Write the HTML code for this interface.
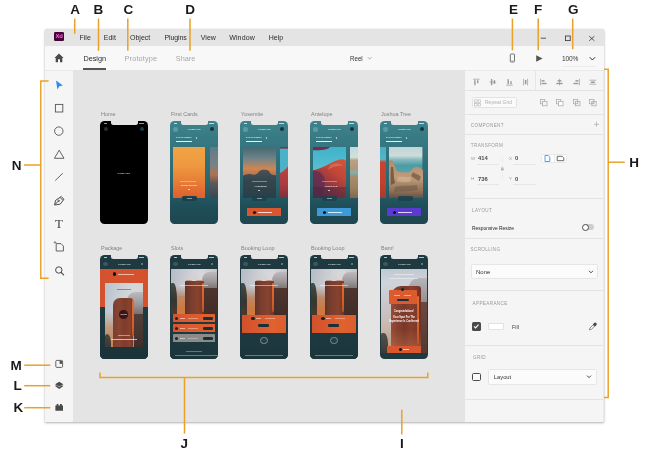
<!DOCTYPE html>
<html>
<head>
<meta charset="utf-8">
<style>
*{margin:0;padding:0;box-sizing:border-box}
html,body{width:650px;height:457px;overflow:hidden;background:#fff}
body{position:relative;font-family:"Liberation Sans",sans-serif;color:#333}
div,span,svg{position:absolute}
#win{left:44.5px;top:29px;width:559.5px;height:393px;background:#e4e4e4;border-radius:1.5px 1.5px 0 0;box-shadow:0 1px 2.5px rgba(0,0,0,.30),0 0 1px rgba(0,0,0,.22)}
#title{left:44.5px;top:29px;width:559.5px;height:17px;background:#e4e4e4;border-radius:1.5px 1.5px 0 0}
#hdr{left:44.5px;top:45.5px;width:559.5px;height:25.5px;background:#f8f8f8;border-bottom:1px solid #e9e9e9}
#tools{left:44.5px;top:71px;width:28.5px;height:351px;background:#f5f5f5}
#canvas{left:73px;top:70px;width:392px;height:352px;background:#e4e4e4}
#panel{left:465px;top:71px;width:139px;height:351px;background:#f5f5f5}
.t{white-space:nowrap;line-height:1}
.menu{font-size:7px;color:#2c2c2c;top:34.3px}
.tab{font-size:7.3px;top:55.2px}
.lbl{font-size:13.5px;font-weight:bold;color:#1a1a1a;line-height:1;white-space:nowrap}
.ab{width:48px;height:103.5px;border-radius:4.5px;overflow:hidden}
.abl{font-size:5.9px;color:#828282;transform:scaleX(.93);transform-origin:0 50%;white-space:nowrap;line-height:1}
.notch{left:10.5px;top:-1px;width:27px;height:4.8px;background:#e4e4e4;border-radius:0 0 2.5px 2.5px}
.ph>div{filter:blur(.55px)}
.ph2>div{filter:blur(.5px)}
.ph>div.tx{filter:blur(.25px)}
.tx{filter:blur(.25px)}
.mt{font-weight:bold;color:#fff;white-space:nowrap;line-height:1;font-size:2px;letter-spacing:.45px}
.sec{font-size:4.6px;letter-spacing:.36px;color:#999;white-space:nowrap;line-height:1}
.sep{left:465px;width:138px;height:1px;background:#e3e3e3}
.pt{font-size:6px;color:#333;white-space:nowrap;line-height:1}
</style>
</head>
<body>
<div id="root" style="left:0;top:0;width:650px;height:457px;will-change:transform;transform:translateZ(0)">
<div id="win"></div>
<div id="title"></div>
<div id="hdr"></div>
<div id="tools"></div>
<div id="canvas"></div>
<div id="panel"></div>

<!-- TITLEBAR -->
<div style="left:53.8px;top:32.2px;width:9.8px;height:9.2px;background:#470137;border-radius:1.2px"></div>
<span class="t" style="left:55.4px;top:34px;font-size:5.9px;font-weight:bold;color:#f76ff0;letter-spacing:-.15px">Xd</span>
<span class="t menu" style="left:79.5px">File</span>
<span class="t menu" style="left:103.8px">Edit</span>
<span class="t menu" style="left:130px">Object</span>
<span class="t menu" style="left:164.6px;letter-spacing:-.15px">Plugins</span>
<span class="t menu" style="left:200.8px">View</span>
<span class="t menu" style="left:229.2px;letter-spacing:.13px">Window</span>
<span class="t menu" style="left:268.8px">Help</span>
<svg style="left:535px;top:30px" width="66" height="16" viewBox="535 30 66 16">
  <path d="M540.8 38.2H546" stroke="#333" stroke-width=".8" fill="none"/>
  <rect x="565.4" y="36" width="4.8" height="4.6" stroke="#333" stroke-width=".8" fill="none"/>
  <path d="M589.2 36.2L594.4 40.8M594.4 36.2L589.2 40.8" stroke="#333" stroke-width=".8" fill="none"/>
</svg>

<!-- HEADER -->
<svg style="left:53px;top:52px" width="12" height="12" viewBox="0 0 12 12">
  <path d="M6 1.6L1.4 5.9H2.7V10.2H5V7.3H7V10.2H9.3V5.9H10.6Z" fill="#4a4a4a"/>
</svg>
<span class="t tab" style="left:83.4px;color:#2c2c2c">Design</span>
<div style="left:83.2px;top:68px;width:22.8px;height:2px;background:#555"></div>
<span class="t tab" style="left:124.6px;color:#a8a8a8;letter-spacing:.15px">Prototype</span>
<span class="t tab" style="left:175.8px;color:#a8a8a8">Share</span>
<span class="t" style="left:349.7px;top:55.8px;font-size:6.8px;color:#333;transform:scaleX(.91);transform-origin:0 50%">Reel</span>
<svg style="left:366px;top:55.4px" width="8" height="7" viewBox="0 0 8 7"><path d="M1.7 2L3.7 4.2L5.7 2" stroke="#999" stroke-width=".7" fill="none"/></svg>
<svg style="left:508px;top:52px" width="40" height="12" viewBox="508 52 40 12">
  <rect x="510.3" y="54" width="4.2" height="8" rx=".8" stroke="#666" stroke-width=".9" fill="none"/>
  <path d="M511.4 60.9H513.4" stroke="#666" stroke-width=".5"/>
  <path d="M536.2 55.2L542.6 58.5L536.2 61.8Z" fill="#555"/>
</svg>
<span class="t" style="left:562px;top:55.8px;font-size:6.6px;color:#3a3a3a;letter-spacing:-.15px">100%</span>
<svg style="left:586px;top:54px" width="12" height="9" viewBox="586 54 12 9"><path d="M589.7 57.2L592.4 60L595.1 57.2" stroke="#333" stroke-width="1" fill="none"/></svg>
<div style="left:562px;top:66px;width:34px;height:1px;background:#ececec"></div>




<!-- ARTBOARD LABELS -->
<span class="abl" style="left:100.6px;top:111.5px">Home</span>
<span class="abl" style="left:170.6px;top:111.5px">First Cards</span>
<span class="abl" style="left:240.6px;top:111.5px">Yosemite</span>
<span class="abl" style="left:310.6px;top:111.5px">Antelope</span>
<span class="abl" style="left:380.6px;top:111.5px">Joshua Tree</span>
<span class="abl" style="left:100.6px;top:246.1px">Package</span>
<span class="abl" style="left:170.6px;top:246.1px">Slots</span>
<span class="abl" style="left:240.6px;top:246.1px">Booking Loop</span>
<span class="abl" style="left:310.6px;top:246.1px">Booking Loop</span>
<span class="abl" style="left:380.6px;top:246.1px">Bam!</span>

<!-- ROW 1 -->
<!-- Home -->
<div class="ab" style="left:100px;top:120.8px;background:#000">
  <div class="notch"></div>
  <div style="left:3.6px;top:6.6px;width:4px;height:4px;border-radius:50%;background:#2b2f30"></div>
  <div style="left:39.6px;top:6.6px;width:4px;height:4px;border-radius:50%;background:#1d3a44"></div>
  <span class="mt" style="left:17.5px;top:50.9px;font-size:2.3px;letter-spacing:.18px;opacity:.8">COMPASS</span><div style="left:3.6px;top:1.9px;width:3px;height:.8px;background:#fff;opacity:.6"></div><div style="left:39.4px;top:1.9px;width:5px;height:.8px;background:#fff;opacity:.6"></div>
</div>
<!-- First Cards -->
<div class="ab" style="left:170px;top:120.8px;background:linear-gradient(#3e838c 0%,#33737d 30%,#2a6670 60%,#1f4f59 82%,#1e4650 100%)">
  <div class="notch"></div>
  <div style="left:3.4px;top:6.4px;width:4.4px;height:4.4px;border-radius:50%;background:#5e9aa2"></div>
  <div style="left:39.8px;top:6.6px;width:4px;height:4px;border-radius:50%;background:#17343b"></div>
  <span class="mt" style="left:17.9px;top:7.6px;font-size:2.3px;letter-spacing:.18px;opacity:.85">COMPASS</span><div style="left:3.6px;top:1.9px;width:3px;height:.8px;background:#fff;opacity:.7"></div><div style="left:39.4px;top:1.9px;width:5px;height:.8px;background:#fff;opacity:.7"></div>
  <span class="mt" style="left:5.8px;top:16.5px;font-size:2.5px;letter-spacing:.1px;opacity:.9">CALIFORNIA</span><div style="left:26.4px;top:16.6px;width:1px;height:2.2px;background:#fff;opacity:.7;transform:rotate(-15deg)"></div>
  <div style="left:5.6px;top:20.3px;width:16.4px;height:.7px;background:#fff;opacity:.9"></div>
  <div style="left:3px;top:26.4px;width:32.4px;height:50.8px;background:linear-gradient(#f0a445 0%,#ee9940 35%,#e67c36 70%,#de5f2e 100%)"></div>
  <div style="left:39.8px;top:26.4px;width:8.2px;height:50.8px;background:linear-gradient(#5e7c86 0%,#7a8284 35%,#b0714f 55%,#5d5a58 70%,#37474e 100%)"></div>
  <div style="left:12px;top:75.6px;width:14.6px;height:4.2px;border-radius:1.5px 1.5px 2px 2px;background:#1b4049"></div>
  <span class="mt" style="left:11px;top:63.2px;font-size:2.3px;letter-spacing:0;opacity:.95;transform:scaleX(.74);transform-origin:0 50%">GETTING STARTED</span>
  <div class="tx" style="left:10.4px;top:60.6px;width:16px;height:.7px;background:#fff;opacity:.35"></div>
  <div class="tx" style="left:17.6px;top:68.4px;width:2px;height:.9px;background:#fff;opacity:.7"></div>
  <div class="tx" style="left:16.6px;top:77.2px;width:5.4px;height:.7px;background:#fff;opacity:.45"></div>
</div>
<!-- Yosemite -->
<div class="ab" style="left:240px;top:120.8px;background:linear-gradient(#3e838c 0%,#33737d 30%,#2a6670 60%,#1f4f59 82%,#1e4650 100%)">
  <div class="notch"></div>
  <div style="left:3.4px;top:6.4px;width:4.4px;height:4.4px;border-radius:50%;background:#5e9aa2"></div>
  <div style="left:39.8px;top:6.6px;width:4px;height:4px;border-radius:50%;background:#17343b"></div>
  <span class="mt" style="left:17.9px;top:7.6px;font-size:2.3px;letter-spacing:.18px;opacity:.85">COMPASS</span><div style="left:3.6px;top:1.9px;width:3px;height:.8px;background:#fff;opacity:.7"></div><div style="left:39.4px;top:1.9px;width:5px;height:.8px;background:#fff;opacity:.7"></div>
  <span class="mt" style="left:5.8px;top:16.5px;font-size:2.5px;letter-spacing:.1px;opacity:.9">CALIFORNIA</span><div style="left:26.4px;top:16.6px;width:1px;height:2.2px;background:#fff;opacity:.7;transform:rotate(-15deg)"></div>
  <div style="left:5.6px;top:20.3px;width:16.4px;height:.7px;background:#fff;opacity:.9"></div>
  <svg style="left:3px;top:26.3px" width="33.4" height="51.2" viewBox="0 0 33.4 51.2">
    <defs>
      <linearGradient id="ysky" x1="0" y1="0" x2="0" y2="1"><stop offset="0" stop-color="#486870"/><stop offset=".2" stop-color="#6a8086"/><stop offset=".33" stop-color="#a08672"/><stop offset=".43" stop-color="#d4844e"/><stop offset=".5" stop-color="#c07a50"/><stop offset="1" stop-color="#30424a"/></linearGradient>
      <linearGradient id="ymt" x1="0" y1="0" x2="0" y2="1"><stop offset="0" stop-color="#4a5258"/><stop offset=".35" stop-color="#36464e"/><stop offset="1" stop-color="#28404a"/></linearGradient>
      <filter id="yb1" x="-10%" y="-10%" width="120%" height="120%"><feGaussianBlur stdDeviation=".45"/></filter>
    </defs>
    <rect width="33.4" height="51.2" fill="url(#ysky)"/>
    <path d="M-1 29C3 27.5 6 26.5 9 27.5C12 28.5 14 27 16 24.4C17.4 22.8 20 22.4 23 22.8C25.6 23.2 26.6 24.6 27.4 26.6C29 28 31.6 28.4 34.4 28V52H-1Z" fill="url(#ymt)" filter="url(#yb1)"/>
  </svg>
  <svg style="left:39.8px;top:26.3px" width="8.2" height="51.2" viewBox="0 0 8.2 51.2">
    <defs><linearGradient id="yr" x1="0" y1="0" x2="0" y2="1"><stop offset="0" stop-color="#c04440"/><stop offset=".6" stop-color="#a83a3e"/><stop offset="1" stop-color="#7c3040"/></linearGradient></defs>
    <rect width="8.2" height="51.2" fill="#4ab2c8"/>
    <rect width="8.2" height="1.6" fill="#8a2a4a"/>
    <path d="M0 26C3 25 6 22 8.2 19V51.2H0Z" fill="url(#yr)"/>
  </svg>
  <div style="left:12px;top:75.6px;width:14.6px;height:4.2px;border-radius:1.5px 1.5px 2px 2px;background:#1d434c;opacity:.9"></div>
  <span class="mt" style="left:14.4px;top:64px;font-size:2.2px;letter-spacing:.15px;opacity:.9">YOSEMITE</span>
  <div class="tx" style="left:11.6px;top:60.6px;width:15px;height:.7px;background:#fff;opacity:.35"></div>
  <div class="tx" style="left:18.2px;top:68.8px;width:2px;height:.9px;background:#fff;opacity:.7"></div>
  <div class="tx" style="left:16.6px;top:77.2px;width:5.4px;height:.7px;background:#fff;opacity:.45"></div>
  <div style="left:7px;top:87.4px;width:33.8px;height:7.8px;border-radius:.6px;background:#d9562e"></div>
  <div style="left:13.4px;top:89.8px;width:3px;height:3px;border-radius:50%;background:#111"></div>
  <div style="left:17.6px;top:91px;width:14px;height:.8px;background:#fff;opacity:.8"></div>
</div>
<!-- Antelope -->
<div class="ab" style="left:310px;top:120.8px;background:linear-gradient(#3e838c 0%,#33737d 30%,#2a6670 60%,#1f4f59 82%,#1e4650 100%)">
  <div class="notch"></div>
  <div style="left:3.4px;top:6.4px;width:4.4px;height:4.4px;border-radius:50%;background:#5e9aa2"></div>
  <div style="left:39.8px;top:6.6px;width:4px;height:4px;border-radius:50%;background:#17343b"></div>
  <span class="mt" style="left:17.9px;top:7.6px;font-size:2.3px;letter-spacing:.18px;opacity:.85">COMPASS</span><div style="left:3.6px;top:1.9px;width:3px;height:.8px;background:#fff;opacity:.7"></div><div style="left:39.4px;top:1.9px;width:5px;height:.8px;background:#fff;opacity:.7"></div>
  <span class="mt" style="left:5.8px;top:16.5px;font-size:2.5px;letter-spacing:.1px;opacity:.9">CALIFORNIA</span><div style="left:26.4px;top:16.6px;width:1px;height:2.2px;background:#fff;opacity:.7;transform:rotate(-15deg)"></div>
  <div style="left:5.6px;top:20.3px;width:16.4px;height:.7px;background:#fff;opacity:.9"></div>
  <svg style="left:3px;top:26.3px" width="33.4" height="51.2" viewBox="0 0 33.4 51.2">
    <defs>
      <linearGradient id="asky" x1="0" y1="0" x2="0" y2="1"><stop offset="0" stop-color="#3fb3ca"/><stop offset=".5" stop-color="#5cc0d0"/><stop offset="1" stop-color="#6cc4d0"/></linearGradient>
      <linearGradient id="arock" x1=".9" y1="0" x2=".25" y2="1"><stop offset="0" stop-color="#d4543c"/><stop offset=".35" stop-color="#c04636"/><stop offset=".7" stop-color="#8a3444"/><stop offset="1" stop-color="#58304a"/></linearGradient>
      <filter id="ab1" x="-10%" y="-10%" width="120%" height="120%"><feGaussianBlur stdDeviation=".5"/></filter>
    </defs>
    <rect width="33.4" height="51.2" fill="url(#asky)"/>
    <path d="M0 0H17C15 2.6 9 3.6 0 3.2Z" fill="#7a2a4c" filter="url(#ab1)"/>
    <path d="M-1 23.5C5 22.5 10 20 16 17C22 14 27 12 30.5 12.4C32.4 12.8 33.6 14 34.4 15.4V52H-1Z" fill="url(#arock)" filter="url(#ab1)"/>
    <path d="M-1 24C4 23 8 25 11 30C13 36 10 46 8 52H-1Z" fill="#5e2e52" opacity=".75" filter="url(#ab1)"/>
    <path d="M17 18.5C22 15.5 27 15.5 30 19C26 18.5 21 19.5 15 22.5Z" fill="#e27a66" opacity=".6" filter="url(#ab1)"/>
    <rect y="40" width="33.4" height="11.2" fill="#3a2436" opacity=".35"/>
  </svg>
  <div style="left:39.6px;top:26.3px;width:8.4px;height:51.2px;background:linear-gradient(#c4dada 0%,#cfe0de 20%,#b8a286 26%,#b49678 42%,#7fb0b0 50%,#a88c6c 58%,#9c8060 80%,#80684e 100%)"></div>
  <div style="left:12px;top:75.6px;width:14.6px;height:4.2px;border-radius:1.5px 1.5px 2px 2px;background:#1d434c;opacity:.9"></div>
  <span class="mt" style="left:14.4px;top:64px;font-size:2.2px;letter-spacing:.15px;opacity:.9">ANTELOPE</span>
  <div class="tx" style="left:11.6px;top:60.6px;width:15px;height:.7px;background:#fff;opacity:.35"></div>
  <div class="tx" style="left:18.2px;top:68.8px;width:2px;height:.9px;background:#fff;opacity:.7"></div>
  <div class="tx" style="left:16.6px;top:77.2px;width:5.4px;height:.7px;background:#fff;opacity:.45"></div>
  <div style="left:7px;top:87.4px;width:33.8px;height:7.8px;border-radius:.6px;background:#3f9bd8"></div>
  <div style="left:13.4px;top:89.8px;width:3px;height:3px;border-radius:50%;background:#111"></div>
  <div style="left:17.6px;top:91px;width:14px;height:.8px;background:#fff;opacity:.8"></div>
</div>
<!-- Joshua Tree -->
<div class="ab" style="left:380px;top:120.8px;background:linear-gradient(#3e838c 0%,#33737d 30%,#2a6670 60%,#1f4f59 82%,#1e4650 100%)">
  <div class="notch"></div>
  <div style="left:3.4px;top:6.4px;width:4.4px;height:4.4px;border-radius:50%;background:#5e9aa2"></div>
  <div style="left:39.8px;top:6.6px;width:4px;height:4px;border-radius:50%;background:#17343b"></div>
  <span class="mt" style="left:17.9px;top:7.6px;font-size:2.3px;letter-spacing:.18px;opacity:.85">COMPASS</span><div style="left:3.6px;top:1.9px;width:3px;height:.8px;background:#fff;opacity:.7"></div><div style="left:39.4px;top:1.9px;width:5px;height:.8px;background:#fff;opacity:.7"></div>
  <span class="mt" style="left:5.8px;top:16.5px;font-size:2.5px;letter-spacing:.1px;opacity:.9">CALIFORNIA</span><div style="left:26.4px;top:16.6px;width:1px;height:2.2px;background:#fff;opacity:.7;transform:rotate(-15deg)"></div>
  <div style="left:5.6px;top:20.3px;width:16.4px;height:.7px;background:#fff;opacity:.9"></div>
  <div style="left:0;top:26.3px;width:5.5px;height:51.2px;background:linear-gradient(#48aec2 0%,#54b6c6 24%,#c8442e 30%,#c4402c 70%,#a83a30 100%)"></div>
  <svg style="left:9.2px;top:26.3px" width="33.4" height="51.2" viewBox="0 0 33.4 51.2">
    <defs>
      <linearGradient id="jsky" x1="0" y1="0" x2="0" y2="1"><stop offset="0" stop-color="#c2d4d6"/><stop offset=".17" stop-color="#cddcdc"/><stop offset=".24" stop-color="#8cbcc0"/><stop offset=".36" stop-color="#4a9ca6"/><stop offset=".5" stop-color="#5aa4aa"/><stop offset="1" stop-color="#5aa4aa"/></linearGradient>
      <linearGradient id="jrock" x1="0" y1="0" x2="0" y2="1"><stop offset="0" stop-color="#b88a66"/><stop offset=".45" stop-color="#c09c7a"/><stop offset=".8" stop-color="#8e7158"/><stop offset="1" stop-color="#5e4c3e"/></linearGradient>
      <filter id="jb1" x="-10%" y="-10%" width="120%" height="120%"><feGaussianBlur stdDeviation=".45"/></filter>
    </defs>
    <rect width="33.4" height="51.2" fill="url(#jsky)"/>
    <path d="M-1 14C1 12.5 3.5 13 4.6 15C5.6 18 6 22 8 24C11 26 14 25 17 25.5C20 26 22 24 24 21.5C26 19.5 29 19.5 31 21C32.6 22 33.6 23 34.4 24V52H-1Z" fill="url(#jrock)" filter="url(#jb1)"/>
    <path d="M4 20C5 24 4.4 30 6 36L2 38C1 32 1.5 25 2 20Z" fill="#5e4636" opacity=".7" filter="url(#jb1)"/>
    <path d="M24 25C26 27 30 27 32 30L30 34C27 32 24 31 22 29Z" fill="#6a5040" opacity=".65" filter="url(#jb1)"/>
    <path d="M9 30C13 29 17 31 21 30L22 34C17 36 12 35 8 34Z" fill="#d8bc9c" opacity=".55" filter="url(#jb1)"/>
    <path d="M6 40C12 38 20 39 28 38L29 43C20 45 12 44 5 45Z" fill="#6a5444" opacity=".5" filter="url(#jb1)"/>
  </svg>
  <div style="left:18.4px;top:75.6px;width:14.6px;height:4.2px;border-radius:1.5px 1.5px 2px 2px;background:#1d434c;opacity:.9"></div>
  <div style="left:7px;top:87.4px;width:33.8px;height:7.8px;border-radius:.6px;background:#5a3ad0"></div>
  <div style="left:13.4px;top:89.8px;width:3px;height:3px;border-radius:50%;background:#111"></div>
  <div style="left:17.6px;top:91px;width:14px;height:.8px;background:#fff;opacity:.8"></div>
</div>


<!-- ROW 2 -->
<!-- Package -->
<div class="ab" style="left:100px;top:255.3px;background:#1e3a40">
  <div class="notch"></div>
  <div style="left:3.4px;top:6.4px;width:4.4px;height:4.4px;border-radius:50%;background:#3c575c"></div>
  <span class="mt" style="left:17.9px;top:7.6px;font-size:2.3px;letter-spacing:.18px;opacity:.85">COMPASS</span><div style="left:3.6px;top:1.9px;width:3px;height:.8px;background:#fff;opacity:.7"></div><div style="left:39.4px;top:1.9px;width:5px;height:.8px;background:#fff;opacity:.7"></div>
  <div style="left:41px;top:7.6px;width:1.8px;height:1.8px;background:#9fb0b2;opacity:.5"></div>
  <div style="left:0;top:13.6px;width:48px;height:37.8px;background:#d4532e"></div>
  <div style="left:0;top:51.4px;width:48px;height:52.1px;background:linear-gradient(#1f3c42,#1c363c 60%,#1a3238)"></div>
  <div style="left:13px;top:17.2px;width:3.4px;height:3.4px;border-radius:50%;background:#111"></div>
  <div class="tx" style="left:17.6px;top:18.6px;width:16.6px;height:0.9px;background:#fff;opacity:0.6"></div>
  <div class="ph" style="left:5px;top:27.6px;width:38px;height:64.4px;overflow:hidden;background:linear-gradient(100deg,#b8c2ce 0%,#d2d6da 50%,#d6d6d8 70%,#c4c2c6 100%)">
    <div style="left:0;top:29.0px;width:38px;height:35.4px;background:linear-gradient(rgba(190,160,140,0),#c09a80 45%,#c8844e)"></div>
    <div style="left:-1.5px;top:51.5px;width:7.6px;height:19.3px;border-radius:40% 50% 0 0;background:linear-gradient(#4a463e,#38342e)"></div>
    <div style="left:20.9px;top:9.0px;width:19.0px;height:23.2px;border-radius:50% 0 0 30%;background:linear-gradient(#bcbabe,#9a9698 55%,#766c6a)"></div>
    <div style="left:28.9px;top:30.9px;width:11.4px;height:38.6px;background:linear-gradient(#54403a,#3a2a26)"></div>
    <div style="left:7.6px;top:14.8px;width:20.5px;height:58.0px;border-radius:7px 3px 0 0;background:linear-gradient(90deg,#7a3e30 0%,#8a4432 30%,#7e3c2c 60%,#8a422e 85%,#6c3628 100%)"></div>
    <div style="left:26.8px;top:17.4px;width:2.5px;height:36.1px;background:linear-gradient(#e66a2c,#d85e28 70%,#b85028);border-radius:1px"></div>
    <div style="left:14.1px;top:27.1px;width:8.6px;height:8.6px;border-radius:50%;background:#3a1416;filter:blur(.3px)"></div><span class="mt" style="left:15.6px;top:30.4px;font-size:2.2px;letter-spacing:.1px;filter:none;opacity:.9">SEND</span><div class="tx" style="left:12px;top:6px;width:14px;height:1px;background:#3c4a52;opacity:0.5"></div><div class="tx" style="left:6px;top:56px;width:26px;height:1px;background:#fff;opacity:0.65"></div><div class="tx" style="left:13px;top:52px;width:12px;height:0.9px;background:#fff;opacity:0.45"></div>
  </div>
</div>
<!-- Slots -->
<div class="ab" style="left:170px;top:255.3px;background:#1e3a40">
  <div class="notch"></div>
  <div style="left:3.4px;top:6.4px;width:4.4px;height:4.4px;border-radius:50%;background:#3c575c"></div>
  <span class="mt" style="left:17.9px;top:7.6px;font-size:2.3px;letter-spacing:.18px;opacity:.85">COMPASS</span><div style="left:3.6px;top:1.9px;width:3px;height:.8px;background:#fff;opacity:.7"></div><div style="left:39.4px;top:1.9px;width:5px;height:.8px;background:#fff;opacity:.7"></div>
  <div style="left:41px;top:7.6px;width:1.8px;height:1.8px;background:#9fb0b2;opacity:.5"></div>
  <div style="left:0;top:55px;width:48px;height:48.5px;background:linear-gradient(#1f3c42,#1b353b)"></div>
  <div class="ph" style="left:1px;top:13.6px;width:46px;height:45.6px;overflow:hidden;background:linear-gradient(100deg,#b4bac4 0%,#d4d4d8 45%,#d8d6d8 60%,#bcb8ba 100%)">
    <div style="left:0;top:17.3px;width:46px;height:28.3px;background:linear-gradient(rgba(176,140,120,0),#b08468 45%,#b47850)"></div>
    <div style="left:4.6px;top:27.4px;width:11.0px;height:20.5px;background:linear-gradient(#c08868,#cc7840 60%,#d07e44)"></div>
    <div style="left:-1.8px;top:13.7px;width:7.4px;height:34.2px;border-radius:40% 50% 0 0;background:linear-gradient(#484a44,#343630 50%,#54392c)"></div>
    <div style="left:31.3px;top:2.7px;width:16.6px;height:18.2px;border-radius:45% 0 0 30%;background:linear-gradient(#bcbabe,#9c9698 55%,#766c6a)"></div>
    <div style="left:33.1px;top:19.2px;width:14.7px;height:31.9px;background:linear-gradient(#4e362e,#3e2a26)"></div>
    <div style="left:13.8px;top:10.9px;width:19.3px;height:41.0px;border-radius:2px 3px 0 0;background:linear-gradient(90deg,#62342a 0%,#7c3e2e 35%,#86432f 70%,#6c3628 100%)"></div>
    <div style="left:30.6px;top:13.7px;width:2.3px;height:29.2px;background:linear-gradient(#e66a2c,#d45c28 70%,#b85028);border-radius:1px"></div>
    <div style="left:20.4px;top:6.5px;width:5.2px;height:5.2px;border-radius:50%;background:#d2d2d6;opacity:.8;filter:blur(.3px)"></div>
    <div class="tx" style="left:14px;top:11.6px;width:18px;height:1px;background:#fff;opacity:0.5"></div><div class="tx" style="left:9px;top:16.4px;width:28px;height:1px;background:#fff;opacity:0.5"></div>
  </div>
  <div style="left:3px;top:59.1px;width:42.4px;height:8px;border-radius:.5px;background:linear-gradient(90deg,#d8552e,#e0622f)"></div>
  <div style="left:3px;top:69.1px;width:42.4px;height:8px;border-radius:.5px;background:linear-gradient(90deg,#d8552e,#e0622f)"></div>
  <div style="left:3px;top:78.9px;width:42.4px;height:8.2px;border-radius:.5px;background:#8b8b89"></div>
  <div style="left:5.4px;top:61.6px;width:3px;height:3px;border-radius:50%;background:#16282c"></div>
  <div style="left:5.4px;top:71.6px;width:3px;height:3px;border-radius:50%;background:#16282c"></div>
  <div style="left:5.4px;top:81.5px;width:3px;height:3px;border-radius:50%;background:#16282c"></div>
  <div style="left:33.4px;top:61.9px;width:9.8px;height:2.5px;border-radius:1.2px;background:#17303a"></div>
  <div style="left:33.4px;top:71.9px;width:9.8px;height:2.5px;border-radius:1.2px;background:#17303a"></div>
  <div style="left:33.4px;top:81.8px;width:9.8px;height:2.5px;border-radius:1.2px;background:#17303a"></div>
  <div class="tx" style="left:10px;top:62.8px;width:5px;height:0.8px;background:#fff;opacity:0.5"></div><div class="tx" style="left:18px;top:62.8px;width:10px;height:0.8px;background:#fff;opacity:0.35"></div>
  <div class="tx" style="left:10px;top:72.8px;width:5px;height:0.8px;background:#fff;opacity:0.5"></div><div class="tx" style="left:18px;top:72.8px;width:10px;height:0.8px;background:#fff;opacity:0.35"></div>
  <div class="tx" style="left:10px;top:82.7px;width:5px;height:0.8px;background:#fff;opacity:0.5"></div><div class="tx" style="left:18px;top:82.7px;width:10px;height:0.8px;background:#fff;opacity:0.3"></div>
  <div class="tx" style="left:16px;top:96.2px;width:16px;height:0.8px;background:#b8c4c6;opacity:0.45"></div>
  <div style="left:5px;top:99.5px;width:43px;height:1.2px;background:#d8562e"></div>
</div>
<!-- Booking Loop 1 -->
<div class="ab" style="left:240px;top:255.3px;background:#1e3a40">
  <div class="notch"></div>
  <div style="left:3.4px;top:6.4px;width:4.4px;height:4.4px;border-radius:50%;background:#3c575c"></div>
  <span class="mt" style="left:17.9px;top:7.6px;font-size:2.3px;letter-spacing:.18px;opacity:.85">COMPASS</span><div style="left:3.6px;top:1.9px;width:3px;height:.8px;background:#fff;opacity:.7"></div><div style="left:39.4px;top:1.9px;width:5px;height:.8px;background:#fff;opacity:.7"></div>
  <div style="left:41px;top:7.6px;width:1.8px;height:1.8px;background:#9fb0b2;opacity:.5"></div>
  <div style="left:0;top:55px;width:48px;height:48.5px;background:linear-gradient(#1f3c42,#1b353b)"></div>
  <div class="ph" style="left:1px;top:13.6px;width:46px;height:46.4px;overflow:hidden;background:linear-gradient(100deg,#b4bac4 0%,#d4d4d8 45%,#d8d6d8 60%,#bcb8ba 100%)">
    <div style="left:0;top:17.6px;width:46px;height:28.8px;background:linear-gradient(rgba(176,140,120,0),#b08468 45%,#b47850)"></div>
    <div style="left:4.6px;top:27.8px;width:11.0px;height:20.9px;background:linear-gradient(#c08868,#cc7840 60%,#d07e44)"></div>
    <div style="left:-1.8px;top:13.9px;width:7.4px;height:34.8px;border-radius:40% 50% 0 0;background:linear-gradient(#484a44,#343630 50%,#54392c)"></div>
    <div style="left:31.3px;top:2.8px;width:16.6px;height:18.6px;border-radius:45% 0 0 30%;background:linear-gradient(#bcbabe,#9c9698 55%,#766c6a)"></div>
    <div style="left:33.1px;top:19.5px;width:14.7px;height:32.5px;background:linear-gradient(#4e362e,#3e2a26)"></div>
    <div style="left:13.8px;top:11.1px;width:19.3px;height:41.8px;border-radius:2px 3px 0 0;background:linear-gradient(90deg,#62342a 0%,#7c3e2e 35%,#86432f 70%,#6c3628 100%)"></div>
    <div style="left:30.6px;top:13.9px;width:2.3px;height:29.7px;background:linear-gradient(#e66a2c,#d45c28 70%,#b85028);border-radius:1px"></div>
    <div style="left:20.4px;top:6.7px;width:5.2px;height:5.2px;border-radius:50%;background:#d2d2d6;opacity:.8;filter:blur(.3px)"></div>
    <div class="tx" style="left:14px;top:11.6px;width:18px;height:1px;background:#fff;opacity:0.5"></div><div class="tx" style="left:9px;top:16.4px;width:28px;height:1px;background:#fff;opacity:0.5"></div>
  </div>
  <div style="left:2px;top:59.6px;width:44px;height:17.8px;background:linear-gradient(100deg,#d2502c,#e0622f 70%,#dc5c2e)"></div>
  <div style="left:11.4px;top:62px;width:3.2px;height:3.2px;border-radius:50%;background:#16282c"></div>
  <div class="tx" style="left:16px;top:63.2px;width:5px;height:0.8px;background:#fff;opacity:0.5"></div><div class="tx" style="left:24.6px;top:63.2px;width:10.4px;height:0.8px;background:#fff;opacity:0.35"></div>
  <div style="left:18px;top:69.2px;width:11.4px;height:2.6px;border-radius:1.3px;background:#17303a"></div>
  <div style="left:20.4px;top:81.8px;width:7.2px;height:7.2px;border-radius:50%;border:.7px solid #7f9092;background:#263f44"></div>
  <div style="left:5px;top:99.6px;width:38px;height:1px;background:#d8562e"></div>
</div>
<!-- Booking Loop 2 -->
<div class="ab" style="left:310px;top:255.3px;background:#1e3a40">
  <div class="notch"></div>
  <div style="left:3.4px;top:6.4px;width:4.4px;height:4.4px;border-radius:50%;background:#3c575c"></div>
  <span class="mt" style="left:17.9px;top:7.6px;font-size:2.3px;letter-spacing:.18px;opacity:.85">COMPASS</span><div style="left:3.6px;top:1.9px;width:3px;height:.8px;background:#fff;opacity:.7"></div><div style="left:39.4px;top:1.9px;width:5px;height:.8px;background:#fff;opacity:.7"></div>
  <div style="left:41px;top:7.6px;width:1.8px;height:1.8px;background:#9fb0b2;opacity:.5"></div>
  <div style="left:0;top:55px;width:48px;height:48.5px;background:linear-gradient(#1f3c42,#1b353b)"></div>
  <div class="ph" style="left:1px;top:13.6px;width:46px;height:46.4px;overflow:hidden;background:linear-gradient(100deg,#b4bac4 0%,#d4d4d8 45%,#d8d6d8 60%,#bcb8ba 100%)">
    <div style="left:0;top:17.6px;width:46px;height:28.8px;background:linear-gradient(rgba(176,140,120,0),#b08468 45%,#b47850)"></div>
    <div style="left:4.6px;top:27.8px;width:11.0px;height:20.9px;background:linear-gradient(#c08868,#cc7840 60%,#d07e44)"></div>
    <div style="left:-1.8px;top:13.9px;width:7.4px;height:34.8px;border-radius:40% 50% 0 0;background:linear-gradient(#484a44,#343630 50%,#54392c)"></div>
    <div style="left:31.3px;top:2.8px;width:16.6px;height:18.6px;border-radius:45% 0 0 30%;background:linear-gradient(#bcbabe,#9c9698 55%,#766c6a)"></div>
    <div style="left:33.1px;top:19.5px;width:14.7px;height:32.5px;background:linear-gradient(#4e362e,#3e2a26)"></div>
    <div style="left:13.8px;top:11.1px;width:19.3px;height:41.8px;border-radius:2px 3px 0 0;background:linear-gradient(90deg,#62342a 0%,#7c3e2e 35%,#86432f 70%,#6c3628 100%)"></div>
    <div style="left:30.6px;top:13.9px;width:2.3px;height:29.7px;background:linear-gradient(#e66a2c,#d45c28 70%,#b85028);border-radius:1px"></div>
    <div style="left:20.4px;top:6.7px;width:5.2px;height:5.2px;border-radius:50%;background:#d2d2d6;opacity:.8;filter:blur(.3px)"></div>
    <div class="tx" style="left:14px;top:11.6px;width:18px;height:1px;background:#fff;opacity:0.5"></div><div class="tx" style="left:9px;top:16.4px;width:28px;height:1px;background:#fff;opacity:0.5"></div>
  </div>
  <div style="left:2px;top:59.6px;width:44px;height:17.8px;background:linear-gradient(100deg,#d2502c,#e0622f 70%,#dc5c2e)"></div>
  <div style="left:11.4px;top:62px;width:3.2px;height:3.2px;border-radius:50%;background:#16282c"></div>
  <div class="tx" style="left:16px;top:63.2px;width:5px;height:0.8px;background:#fff;opacity:0.5"></div><div class="tx" style="left:24.6px;top:63.2px;width:10.4px;height:0.8px;background:#fff;opacity:0.35"></div>
  <div style="left:18px;top:69.2px;width:11.4px;height:2.6px;border-radius:1.3px;background:#17303a"></div>
  <div style="left:20.4px;top:81.8px;width:7.2px;height:7.2px;border-radius:50%;border:.7px solid #7f9092;background:#263f44"></div>
  <div style="left:5px;top:99.6px;width:38px;height:1px;background:#d8562e"></div>
</div>
<!-- Bam -->
<div class="ab" style="left:380px;top:255.3px;background:#1e3a40">
  <div class="notch"></div>
  <div style="left:3.4px;top:6.4px;width:4.4px;height:4.4px;border-radius:50%;background:#3c575c"></div>
  <span class="mt" style="left:17.9px;top:7.6px;font-size:2.3px;letter-spacing:.18px;opacity:.85">COMPASS</span><div style="left:3.6px;top:1.9px;width:3px;height:.8px;background:#fff;opacity:.7"></div><div style="left:39.4px;top:1.9px;width:5px;height:.8px;background:#fff;opacity:.7"></div>
  <div style="left:41px;top:7.6px;width:1.8px;height:1.8px;background:#9fb0b2;opacity:.5"></div>
  <div class="ph2" style="left:1px;top:13.6px;width:46px;height:84.4px;overflow:hidden;background:linear-gradient(#c0c8d2 0%,#d0d4da 16%,#cac8cc 40%,#c8b8ac 70%,#b89478 100%)">
    <div style="left:27px;top:9px;width:21px;height:26px;border-radius:50% 0 0 40%;background:linear-gradient(#b4b2b6,#8c8688);opacity:.9"></div>
    <div style="left:38.6px;top:33px;width:9px;height:53px;background:linear-gradient(#6a4a40,#523830)"></div>
    <div style="left:10px;top:17px;width:29.6px;height:70px;border-radius:10px 3px 0 0;background:linear-gradient(90deg,#9a4c3a 0%,#86402e 22%,#7a382a 45%,#883e2c 65%,#7e3a2a 85%,#6e3226 100%)"></div>
    <div style="left:10px;top:60px;width:29.6px;height:26px;background:linear-gradient(rgba(200,120,80,0),rgba(200,120,80,.6))"></div>
    <div style="left:36px;top:27px;width:2.4px;height:48px;border-radius:1px;background:linear-gradient(#e06a2e,#d45c2a 70%,#bc502a)"></div>
    <div style="left:-1px;top:64px;width:8px;height:22px;border-radius:30% 50% 0 0;background:linear-gradient(#55504a,#3a3832)"></div>
    <div class="tx" style="left:13px;top:5.4px;width:20px;height:0.9px;background:#fff;opacity:0.45"></div><div class="tx" style="left:9px;top:9.4px;width:28px;height:0.9px;background:#fff;opacity:0.45"></div>
  </div>
  <div style="left:8.8px;top:34.6px;width:27.8px;height:14.2px;border-radius:1px;background:#db5a2e"></div>
  <div style="left:20.8px;top:33px;width:3.2px;height:3.2px;border-radius:50%;background:#16282c"></div>
  <div style="left:16.6px;top:43.6px;width:12px;height:2.6px;border-radius:1.3px;background:#17303a"></div>
  <div class="tx" style="left:14px;top:39.8px;width:6px;height:0.8px;background:#fff;opacity:0.5"></div><div class="tx" style="left:24px;top:39.8px;width:7px;height:0.8px;background:#fff;opacity:0.5"></div>
  <span class="mt" style="left:0;width:48px;text-align:center;top:55px;font-size:3px;letter-spacing:0;transform:scaleX(.84)">Congratulations!</span>
  <span class="mt" style="left:0;width:48px;text-align:center;top:60.4px;font-size:3px;letter-spacing:0;transform:scaleX(.84)">Your Spot For The</span>
  <span class="mt" style="left:0;width:48px;text-align:center;top:65.2px;font-size:3px;letter-spacing:0;transform:scaleX(.84)">Experience Is Confirmed</span>
  <div style="left:7px;top:90.4px;width:33.8px;height:7.6px;border-radius:.6px;background:#d9562e"></div>
  <div style="left:19px;top:92.6px;width:3px;height:3px;border-radius:50%;background:#111"></div>
  <div class="tx" style="left:23px;top:93.8px;width:6px;height:0.8px;background:#fff;opacity:0.7"></div>
</div>

<!-- RIGHT PANEL -->
<div style="left:602.8px;top:71px;width:1.4px;height:351px;background:#e9e8ec"></div>
<div class="sep" style="top:90px"></div>
<div class="sep" style="top:114px"></div>
<div class="sep" style="top:134px"></div>
<div class="sep" style="top:198px"></div>
<div class="sep" style="top:238px"></div>
<div class="sep" style="top:290px"></div>
<div class="sep" style="top:345px"></div>
<div class="sep" style="top:399px"></div>
<div style="left:535px;top:71px;width:1px;height:19px;background:#e6e6e6"></div>

<svg style="left:465px;top:70px" width="139" height="46" viewBox="465 70 139 46">
  <g stroke="#9a9a9a" stroke-width=".7" fill="#9a9a9a">
    <!-- align top -->
    <path d="M473 79.2H479.6" fill="none"/><rect x="474.2" y="80.2" width="1.4" height="5" stroke="none"/><rect x="477" y="80.2" width="1.4" height="3" stroke="none"/>
    <!-- align middle -->
    <path d="M489.6 82.1H496.2" fill="none"/><rect x="490.9" y="79" width="1.4" height="6.2" stroke="none"/><rect x="493.7" y="80.2" width="1.4" height="3.8" stroke="none"/>
    <!-- align bottom -->
    <path d="M506.2 85.2H512.8" fill="none"/><rect x="507.5" y="79.2" width="1.4" height="5" stroke="none"/><rect x="510.3" y="81.2" width="1.4" height="3" stroke="none"/>
    <!-- distribute horiz -->
    <path d="M523.6 78.8V85.4M527.6 78.8V85.4" fill="none"/><rect x="524.9" y="80" width="1.5" height="4.2" stroke="none"/>
    <!-- align left -->
    <path d="M540.6 78.8V85.4" fill="none"/><rect x="541.6" y="80.1" width="3" height="1.4" stroke="none"/><rect x="541.6" y="82.8" width="5" height="1.4" stroke="none"/>
    <!-- align center -->
    <path d="M559.5 78.8V85.4" fill="none"/><rect x="557.6" y="80.1" width="3.8" height="1.4" stroke="none"/><rect x="556.4" y="82.8" width="6.2" height="1.4" stroke="none"/>
    <!-- align right -->
    <path d="M579.4 78.8V85.4" fill="none"/><rect x="575.4" y="80.1" width="3" height="1.4" stroke="none"/><rect x="573.4" y="82.8" width="5" height="1.4" stroke="none"/>
    <!-- distribute vert -->
    <path d="M589.4 80.2H596.2M589.4 84.2H596.2" fill="none"/><rect x="590.8" y="81.5" width="4" height="1.5" stroke="none"/>
  </g>
  <!-- boolean ops -->
  <g stroke="#a6a6a6" stroke-width=".7" fill="none">
    <rect x="540.4" y="99.4" width="4.4" height="4.4"/><rect x="542.6" y="101.4" width="4.4" height="4.4" fill="#f5f5f5"/>
    <rect x="556.4" y="99.4" width="4.4" height="4.4"/><rect x="558.6" y="101.4" width="4.4" height="4.4" fill="#fff"/>
    <rect x="573.4" y="99.4" width="4.4" height="4.4"/><rect x="575.6" y="101.4" width="4.4" height="4.4"/>
    <rect x="589.6" y="99.4" width="4.4" height="4.4"/><rect x="591.8" y="101.4" width="4.4" height="4.4"/><path d="M591.8 102.6H594M591.8 103.6H594" stroke-width=".4"/>
  </g>
</svg>
<!-- repeat grid -->
<div style="left:472px;top:97.4px;width:44.8px;height:11px;border:1px solid #e3e3e3;border-radius:1.5px;background:#fbfbfb"></div>
<svg style="left:473px;top:98px" width="10" height="10" viewBox="473 98 10 10"><g stroke="#b4b4b4" stroke-width=".6" fill="none"><rect x="474.6" y="99.9" width="2.5" height="2.5"/><rect x="478.1" y="99.9" width="2.5" height="2.5"/><rect x="474.6" y="103.4" width="2.5" height="2.5"/><rect x="478.1" y="103.4" width="2.5" height="2.5"/></g></svg>
<span class="t" style="left:485px;top:100.3px;font-size:5.4px;color:#b2b2b2;transform:scaleX(.93);transform-origin:0 50%">Repeat Grid</span>

<span class="sec" style="left:470.8px;top:123.9px">COMPONENT</span>
<svg style="left:592px;top:120px" width="9" height="9" viewBox="592 120 9 9"><path d="M594 124.3H599M596.5 121.8V126.8" stroke="#9a9a9a" stroke-width=".6"/></svg>

<span class="sec" style="left:470.8px;top:143.9px">TRANSFORM</span>
<span class="t" style="left:471px;top:157px;font-size:4.4px;color:#999">W</span>
<span class="t" style="left:478px;top:156.1px;font-size:5.8px;font-weight:bold;color:#4a4a4a">414</span>
<div style="left:477px;top:164px;width:21.5px;height:1px;background:#e6e6e6"></div>
<span class="t" style="left:509px;top:157px;font-size:4.4px;color:#999">X</span>
<span class="t" style="left:515px;top:156.1px;font-size:5.8px;font-weight:bold;color:#4a4a4a">0</span>
<div style="left:513px;top:164px;width:23px;height:1px;background:#e6e6e6"></div>
<span class="t" style="left:471px;top:177.4px;font-size:4.4px;color:#999">H</span>
<span class="t" style="left:478px;top:176.5px;font-size:5.8px;font-weight:bold;color:#4a4a4a">736</span>
<div style="left:477px;top:184.1px;width:21.5px;height:1px;background:#e6e6e6"></div>
<span class="t" style="left:509px;top:177.4px;font-size:4.4px;color:#999">Y</span>
<span class="t" style="left:515px;top:176.5px;font-size:5.8px;font-weight:bold;color:#4a4a4a">0</span>
<div style="left:513px;top:184.1px;width:23px;height:1px;background:#e6e6e6"></div>
<svg style="left:498px;top:154px" width="9" height="32" viewBox="498 154 9 32">
  <path d="M502.3 156V164M502.3 173V181" stroke="#d4d4d4" stroke-width=".5" stroke-dasharray="1 1"/>
  <rect x="501" y="168.4" width="2.6" height="2" fill="#aaa"/><path d="M501.5 168.4V167.6A.8 .8 0 0 1 503.1 167.6V168.4" stroke="#aaa" stroke-width=".5" fill="none"/>
</svg>
<div style="left:540.8px;top:153.5px;width:26.4px;height:9.4px;border:1px solid #e8e8e8;border-radius:1.5px;background:#fdfdfd"></div>
<div style="left:553.6px;top:154.5px;width:1px;height:7.4px;background:#ececec"></div>
<svg style="left:541px;top:153px" width="27" height="11" viewBox="541 153 27 11">
  <path d="M545 155.5H548.2L549.8 157.1V161.5H545Z" stroke="#2d8ceb" stroke-width=".8" fill="none"/>
  <path d="M557.2 156.3H562.2L563.8 157.9V160.7H557.2Z" stroke="#4a4a4a" stroke-width=".8" fill="none"/>
</svg>

<span class="sec" style="left:472px;top:209.3px">LAYOUT</span>
<span class="pt" style="left:472px;top:226px;font-size:5.8px;color:#222;transform:scaleX(.846);transform-origin:0 50%">Responsive Resize</span>
<div style="left:583px;top:224.3px;width:11px;height:6px;border-radius:3px;background:#cecece"></div>
<div style="left:581.8px;top:223.8px;width:7.2px;height:7.2px;border-radius:50%;background:#fff;border:1.1px solid #4a4a4a"></div>

<span class="sec" style="left:470.6px;top:247.9px">SCROLLING</span>
<div style="left:471px;top:263.5px;width:127.4px;height:15.2px;border:1px solid #e6e6e6;border-radius:1.5px;background:#fbfbfb"></div>
<span class="pt" style="left:476px;top:268.8px;font-size:6px">None</span>
<svg style="left:586px;top:266.7px" width="10" height="9" viewBox="586 266 10 9"><path d="M589 269.8L591 271.8L593 269.8" stroke="#333" stroke-width=".9" fill="none"/></svg>

<span class="sec" style="left:472.6px;top:302.1px">APPEARANCE</span>
<div style="left:472.4px;top:322.2px;width:8.4px;height:8.4px;border-radius:1.6px;background:#4a4a4a"></div>
<svg style="left:472.4px;top:322.2px" width="8.4" height="8.4" viewBox="0 0 8.4 8.4"><path d="M2 4.3L3.6 5.9L6.5 2.6" stroke="#fff" stroke-width="1.1" fill="none"/></svg>
<div style="left:488.4px;top:322.6px;width:15.2px;height:7px;background:#fff;border:1px solid #e2e2e2;border-radius:1px"></div>
<span class="pt" style="left:512px;top:324.6px;font-size:5.4px;color:#444">Fill</span>
<svg style="left:588px;top:322px" width="10" height="10" viewBox="588 322 10 10">
  <path d="M589.4 329.8L590 328L593.2 324.8L594.6 326.2L591.4 329.4Z" stroke="#4a4a4a" stroke-width=".6" fill="none"/>
  <path d="M592.8 324.4L595 326.6L596.3 325.3A1.1 1.1 0 0 0 594.1 323.1Z" fill="#4a4a4a"/>
</svg>

<span class="sec" style="left:473px;top:356.1px">GRID</span>
<div style="left:472.4px;top:372.8px;width:8.4px;height:8.4px;border-radius:1.6px;border:1.1px solid #4a4a4a;background:#fafafa"></div>
<div style="left:488px;top:369.2px;width:109.2px;height:15.4px;border:1px solid #e6e6e6;border-radius:1.5px;background:#fbfbfb"></div>
<span class="pt" style="left:493.8px;top:374.6px;font-size:5.8px">Layout</span>
<svg style="left:584px;top:372px" width="10" height="9" viewBox="584 372 10 9"><path d="M587 375.6L589 377.6L591 375.6" stroke="#333" stroke-width=".9" fill="none"/></svg>

<!-- LEFT TOOLS -->
<svg style="left:44px;top:70px" width="30" height="352" viewBox="44 70 30 352">
  <!-- select -->
  <path d="M56 80.6L62.9 85.5L59.3 86.3L57.4 89.6Z" fill="#2d8ceb"/>
  <!-- rect -->
  <rect x="55.4" y="104.4" width="7.4" height="7.6" stroke="#555" stroke-width=".9" fill="none"/>
  <!-- ellipse -->
  <circle cx="58.8" cy="131.1" r="4.2" stroke="#555" stroke-width=".9" fill="none"/>
  <!-- triangle -->
  <path d="M59.2 150.2L64 158.3H54.4Z" stroke="#555" stroke-width=".9" fill="none" stroke-linejoin="miter"/>
  <!-- line -->
  <path d="M55.2 180.6L62.8 173.2" stroke="#555" stroke-width=".9" fill="none"/>
  <!-- pen -->
  <g stroke="#444" stroke-width=".95" fill="none" stroke-linejoin="round">
    <path d="M54.6 205L55.6 200.3L60 197.4L63 200.4L60.2 204.2Z"/>
    <path d="M60 197.4L61.2 196.4L63.8 199.2L63 200.4"/>
    <path d="M54.8 204.8L58.2 201.2"/>
    <circle cx="58.7" cy="200.8" r=".7"/>
  </g>
  <!-- artboard -->
  <g stroke="#555" stroke-width=".9" fill="none">
    <path d="M56.2 243.6H61L63.4 246V251H56.2Z"/>
    <path d="M53.6 242.4H56.4M55 241V243.8" stroke-width=".6"/>
  </g>
  <!-- zoom -->
  <circle cx="58.8" cy="270" r="3.2" stroke="#4a4a4a" stroke-width="1" fill="none"/>
  <path d="M61.1 272.4L63.6 274.9" stroke="#4a4a4a" stroke-width="1.2" stroke-linecap="round"/>
  <!-- assets -->
  <g>
    <rect x="55.8" y="360.4" width="6.8" height="7" rx="1" stroke="#555" stroke-width=".9" fill="none"/>
    <rect x="59.6" y="360.9" width="2.6" height="3" fill="#555"/>
  </g>
  <!-- layers -->
  <path d="M59.2 381.8L63.4 384.2L59.2 386.6L55 384.2Z" fill="#4a4a4a"/>
  <path d="M55 386.1L56.4 385.3L59.2 386.9L62 385.3L63.4 386.1L59.2 388.9Z" fill="#4a4a4a"/>
  <!-- plugins -->
  <path d="M55.4 405.6H56.6V404H58.4V405.6H60V404H61.8V405.6H63V410.8H55.4Z" fill="#4a4a4a"/>
</svg>
<span class="t" style="left:54.9px;top:216.8px;font-family:'Liberation Serif',serif;font-size:13px;color:#444">T</span>

<!-- ANNOTATIONS -->
<svg style="left:0;top:0" width="650" height="457" viewBox="0 0 650 457">
  <g stroke="#e9a227" stroke-width="1.5" fill="none">
    <path d="M74.7 18.5V33.7"/>
    <path d="M98.5 18.5V50.8"/>
    <path d="M127.8 18.5V50.8"/>
    <path d="M190 18.5V50.8"/>
    <path d="M512.4 18.5V50.3"/>
    <path d="M538.2 18.5V50.3"/>
    <path d="M572.7 18.5V49.2"/>
    <!-- H -->
    <path d="M604 69.3H608.2V397.6H604"/>
    <path d="M608.2 162.2H624.8"/>
    <!-- N -->
    <path d="M48.6 81H40.8V278.3H48.6"/>
    <path d="M24 165H40.8"/>
    <!-- M L K -->
    <path d="M24.2 365.2H50.3"/>
    <path d="M24.2 385.7H50.3"/>
    <path d="M24.2 407.7H50.3"/>
    <!-- J -->
    <path d="M100 372.6V377.5H427.8V372.6"/>
    <path d="M184.5 377.5V433.6"/>
    <!-- I -->
    <path d="M401.8 409.8V434.4"/>
  </g>
</svg>
<span class="lbl" style="left:70.3px;top:3px">A</span>
<span class="lbl" style="left:93.6px;top:3px">B</span>
<span class="lbl" style="left:123.6px;top:3px">C</span>
<span class="lbl" style="left:185.3px;top:3px">D</span>
<span class="lbl" style="left:509px;top:3px">E</span>
<span class="lbl" style="left:534px;top:3px">F</span>
<span class="lbl" style="left:568px;top:3px">G</span>
<span class="lbl" style="left:629.2px;top:155.9px">H</span>
<span class="lbl" style="left:400px;top:436.7px">I</span>
<span class="lbl" style="left:180.5px;top:436.7px">J</span>
<span class="lbl" style="left:13.6px;top:401.3px">K</span>
<span class="lbl" style="left:13.6px;top:379.3px">L</span>
<span class="lbl" style="left:10.5px;top:359.3px">M</span>
<span class="lbl" style="left:11.8px;top:158.6px">N</span>

</div>
</body>
</html>
